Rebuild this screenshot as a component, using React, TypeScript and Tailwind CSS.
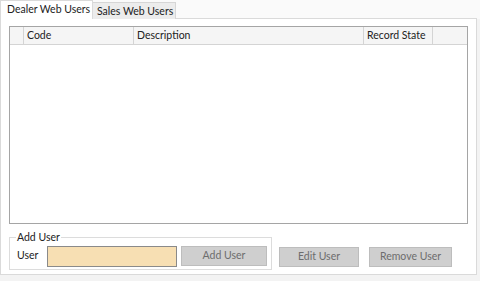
import React from 'react';

const font = { fontFamily: 'Lato, "Noto Sans", sans-serif' };

const Btn = ({ label, w }: { label: string; w: string }) => (
  <div
    className={`${w} h-[20px] flex items-center justify-center bg-[#cfcfcf] border border-[#bdbdbd] text-[10.5px] text-[#6d6d6d] whitespace-nowrap`}
  >
    {label}
  </div>
);

export default function App() {
  return (
    <div className="w-[480px] h-[281px] bg-[#f3f3f3] text-[#222] overflow-hidden whitespace-nowrap" style={font}>
      <div className="flex h-[19px] items-end bg-[#fafafa]">
        <div className="w-[93px] h-[19px] bg-white border border-b-0 border-[#dadada] text-[10.5px] pl-[6px] leading-[17px] relative z-10">
          Dealer Web Users
        </div>
        <div className="w-[83px] h-[17px] bg-[#ececec] border border-l-0 border-b-0 border-[#d6d6d6] text-[10.5px] pl-[4px] leading-[16px]">
          Sales Web Users
        </div>
      </div>
      <div className="w-[477px] h-[257px] -mt-px bg-white border border-[#dadada] pt-[7px] px-[8px] flex flex-col">
        <div className="h-[198px] border border-[#a5a5a5] flex flex-col">
          <div className="flex h-[18px] bg-[#f5f5f5] border-b border-[#d4d4d4] text-[10.5px] leading-[17px]">
            <div className="w-[14px] border-r border-[#d4d4d4]" />
            <div className="w-[110px] border-r border-[#d4d4d4] pl-[3px]">Code</div>
            <div className="w-[230px] border-r border-[#d4d4d4] pl-[3px]">Description</div>
            <div className="w-[69px] border-r border-[#d4d4d4] pl-[3px]">Record State</div>
            <div className="flex-1" />
          </div>
          <div className="flex-1 bg-white" />
        </div>
        <div className="flex mt-[6px] items-start">
          <div className="relative w-[263px] h-[33px] mt-[7px] border border-[#dcdcdc] flex items-center pl-[7px] pt-[5px]">
            <span className="absolute -top-[9px] left-[6px] bg-white px-[1px] text-[10.5px] leading-[16px]">Add User</span>
            <span className="text-[10.5px] w-[30px]">User</span>
            <div className="w-[130px] h-[21px] bg-[#f7dfb3] border border-[#8a8a8a]" />
            <div className="ml-[4px]">
              <Btn label="Add User" w="w-[86px]" />
            </div>
          </div>
          <div className="flex gap-[10px] ml-[7px] mt-[17px]">
            <Btn label="Edit User" w="w-[80px]" />
            <Btn label="Remove User" w="w-[83px]" />
          </div>
        </div>
      </div>
    </div>
  );
}
